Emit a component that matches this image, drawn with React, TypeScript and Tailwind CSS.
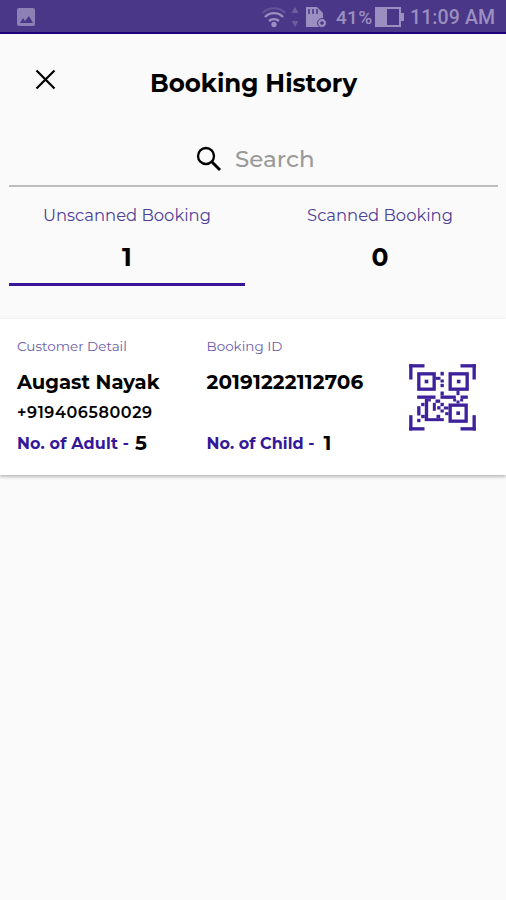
import React from "react";

function WifiIcon() {
  return (
    <svg width="26" height="22" viewBox="0 0 26 22" fill="none" stroke="#9a8fc0" strokeWidth="2.4">
      <path d="M1.500 7a16.500 16.500 0 0 1 23 0" opacity=".3" />
      <path d="M4 11a12.500 12.500 0 0 1 18 0" />
      <path d="M8 15a7.500 7.500 0 0 1 10 0" />
      <circle cx="13" cy="18.500" r="2.700" fill="#9a8fc0" stroke="none" />
    </svg>
  );
}

const qrBars: number[][] = [
  [28, 28, 46, 10], [28, 28, 10, 46], [182, 28, 46, 10], [218, 28, 10, 46],
  [28, 217, 46, 10], [28, 181, 10, 46], [182, 217, 46, 10], [218, 181, 10, 46],
  [107, 66, 15, 9], [122, 51, 10, 11], [122, 74, 10, 9], [122, 87, 10, 10],
  [122, 110, 10, 12], [52, 122, 55, 10], [122, 122, 46, 10], [182, 122, 22, 10],
  [170, 107, 9, 14], [170, 137, 9, 9], [160, 132, 9, 8], [181, 132, 9, 8],
  [75, 132, 10, 66], [107, 134, 14, 10], [99, 144, 9, 24], [85, 132, 8, 8],
  [52, 154, 10, 28], [64, 144, 10, 10], [122, 144, 10, 10], [112, 154, 10, 10],
  [132, 155, 14, 9], [122, 164, 10, 9], [136, 172, 10, 9], [75, 190, 57, 9],
  [64, 180, 11, 10], [52, 192, 10, 10], [110, 180, 11, 10],
];

const qrFinders: number[][] = [[52, 52, 56, 56], [146, 52, 61, 56], [146, 146, 58, 58]];

function QrIcon() {
  return (
    <svg width="67" height="67" viewBox="27.500 27.500 201 201" fill="#3f229b">
      {qrBars.map(([x, y, w, h], i) => <rect key={i} x={x} y={y} width={w} height={h} />)}
      {qrFinders.map(([x, y, w, h], i) => (
        <g key={i}>
          <rect x={x + 5} y={y + 5} width={w - 10} height={h - 10} fill="none" stroke="#3f229b" strokeWidth="10" />
          <rect x={x + w / 2 - 5.5} y={y + h / 2 - 5.5} width="11" height="11" />
        </g>
      ))}
    </svg>
  );
}

export default function App() {
  return (
    <div className="h-[900px] w-[506px] overflow-hidden bg-[#fafafa] font-['Montserrat','Inter',sans-serif] text-black">
      <header className="flex h-[34px] items-center border-b-2 border-[#1d0079] bg-[#4a3787] pt-[2px] text-[#9a8fc0]">
        <svg className="ml-[17px]" width="18" height="18" viewBox="0 0 18 18">
          <rect width="18" height="18" rx="2" fill="#8d80b4" />
          <path d="M3 15l3-5 2 3 4-5 4 7z" fill="#4a3787" />
        </svg>
        <div className="ml-[226px]"><WifiIcon /></div>
        <svg className="ml-[3px]" width="10" height="22" viewBox="0 0 10 22" fill="#6d5d9f"><path d="M5 1l3.500 6h-7zM5 21l3.500-6h-7z" /></svg>
        <svg className="ml-[5px]" width="24" height="24" viewBox="0 0 24 24">
          <path d="M1 2h11l6 6v14H1z" fill="#9a8fc0" />
          <path d="M4 4v5M8 4v5M12 4v5" stroke="#4a3787" strokeWidth="1.500" />
          <circle cx="17" cy="18" r="4.500" fill="#9a8fc0" stroke="#4a3787" />
          <circle cx="17" cy="18" r="1.800" fill="#4a3787" />
        </svg>
        <span className="ml-[7px] w-[39px] whitespace-nowrap pt-[2px] font-['Roboto',sans-serif] text-[19px] font-medium tracking-[0.3px]">41%</span>
        <svg width="29" height="20" viewBox="0 0 29 20">
          <path d="M1 1h24v18H1z" fill="none" stroke="#9a8fc0" strokeWidth="2" /><path d="M1 1h11v18H1zM26 6h3v8h-3z" fill="#9a8fc0" />
        </svg>
        <span className="ml-[6px] whitespace-nowrap pt-[2px] font-['Roboto',sans-serif] text-[19.500px] font-medium tracking-[0.1px]">11:09 AM</span>
      </header>

      <div className="flex h-[98px] items-center">
        <svg className="-mt-[7px] ml-[35px]" width="21" height="21" viewBox="0 0 21 21" stroke="#000" strokeWidth="2.200"><path d="M1.500 1.500l18 18M19.500 1.500l-18 18" /></svg>
        <h1 className="ml-[94px] whitespace-nowrap text-[24.500px] font-bold">Booking History</h1>
      </div>

      <div className="ml-[9px] mr-[8px] flex h-[55px] items-center border-b-2 border-[#bdbdbd]">
        <svg className="ml-[187px]" width="26" height="26" viewBox="0 0 26 26" fill="none" stroke="#000">
          <circle cx="10" cy="10" r="8" strokeWidth="2.300" /><path d="M16 16l8 8" strokeWidth="3" />
        </svg>
        <span className="ml-[13px] mt-px text-[23px] font-medium text-[#999]">Search</span>
      </div>

      <div className="flex h-[132px] px-[9px]">
        <div className="flex h-[99px] w-[236px] shrink-0 flex-col items-center border-b-[3px] border-[#3a1598]">
          <span className="mt-[16px] text-[16.400px] leading-6 text-[#4f3d96]">Unscanned Booking</span>
          <span className="mt-[14px] text-[25px] font-bold leading-8">1</span>
        </div>
        <div className="ml-[17px] flex h-[99px] w-[236px] shrink-0 flex-col items-center">
          <span className="mt-[16px] text-[16.400px] leading-6 text-[#4f3d96]">Scanned Booking</span>
          <span className="mt-[14px] text-[25px] font-bold leading-8">0</span>
        </div>
      </div>

      <section className="flex h-[156px] bg-white pl-[17px] shadow-[0_2px_3px_rgba(0,0,0,.25),0_-1px_3px_rgba(0,0,0,.04)]">
        <div className="flex w-[189.500px] flex-col whitespace-nowrap pt-[17px]">
          <span className="text-[13.500px] leading-5 text-[#6c5daa]">Customer Detail</span>
          <span className="mt-[12px] text-[19.600px] font-bold leading-7">Augast Nayak</span>
          <span className="mt-[5px] text-[16px] font-semibold leading-6 tracking-[0.6px]">+919406580029</span>
          <span className="mt-[7px] flex items-center text-[16px] font-bold leading-6 tracking-[0.150px] text-[#341899]">No. of Adult -<span className="-mt-[2px] ml-[6px] text-[20px] text-black">5</span></span>
        </div>
        <div className="flex w-[202px] flex-col whitespace-nowrap pt-[17px]">
          <span className="text-[13.500px] leading-5 text-[#6c5daa]">Booking ID</span>
          <span className="mt-[12px] text-[20px] font-bold leading-7 tracking-[0.150px]">20191222112706</span>
          <span className="mt-[36px] flex items-center text-[16px] font-bold leading-6 tracking-[0.050px] text-[#341899]">No. of Child -<span className="-mt-[2px] ml-[9px] text-[20px] text-black">1</span></span>
        </div>
        <div className="pt-[45px]"><QrIcon /></div>
      </section>
    </div>
  );
}
